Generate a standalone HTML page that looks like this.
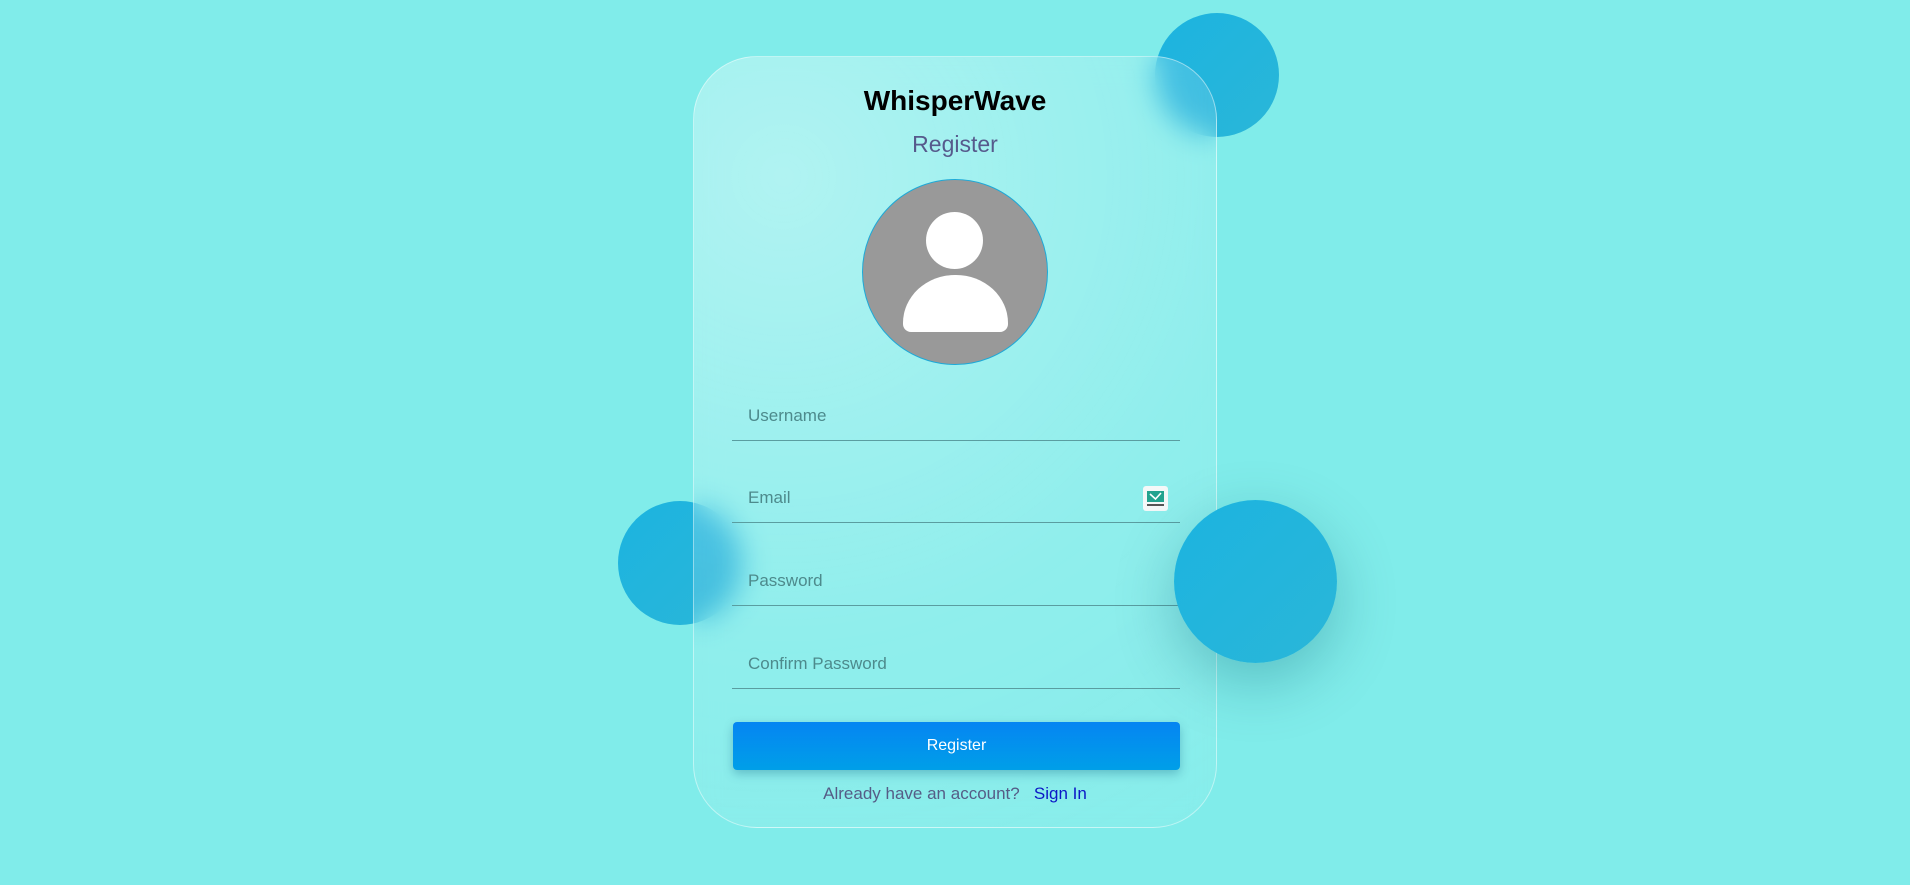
<!DOCTYPE html>
<html><head><meta charset="utf-8"><style>
html,body{margin:0;padding:0}
body{width:1910px;height:885px;background:#80ecea;position:relative;overflow:hidden;font-family:"Liberation Sans",Arial,sans-serif}
.c{position:absolute;border-radius:50%;background:linear-gradient(135deg,#1cb4e0,#2ab6d8)}
.card{position:absolute;left:693px;top:56px;width:524px;height:772px;box-sizing:border-box;border-radius:64px;border:1.5px solid rgba(255,255,255,.45);background:radial-gradient(circle at 90px 120px,rgba(255,255,255,.38),rgba(255,255,255,.12) 60%,rgba(255,255,255,.05));backdrop-filter:blur(14px);-webkit-backdrop-filter:blur(14px)}
.t{position:absolute;left:0;width:100%;text-align:center}
.f{position:absolute;left:38px;width:448px;border-bottom:1px solid #5a9da0;height:40px}
.f span{position:absolute;left:16px;top:6px;font-size:17px;color:#4d8a8c}
</style></head><body>
<div class="c" style="left:1155px;top:13px;width:124px;height:124px"></div>
<div class="c" style="left:618px;top:501px;width:124px;height:124px"></div>
<div class="card">
  <div class="t" style="top:28px;font-size:28px;font-weight:bold;color:#000">WhisperWave</div>
  <div class="t" style="top:74px;font-size:23px;color:#565a8c">Register</div>
  <div style="position:absolute;left:168px;top:122px;width:184px;height:184px;border-radius:50%;background:#999;border:1.5px solid #1da9d8;overflow:hidden">
    <div style="position:absolute;left:63px;top:32px;width:57px;height:57px;border-radius:50%;background:#fff"></div>
    <div style="position:absolute;left:40px;top:95px;width:105px;height:57px;background:#fff;border-radius:52px 52px 8px 8px/48px 48px 8px 8px"></div>
  </div>
  <div class="f" style="top:343px"><span>Username</span></div>
  <div class="f" style="top:425px"><span>Email</span>
    <div style="position:absolute;right:12px;top:4px;width:25px;height:25px;background:#f4f8f8;border-radius:3px">
      <div style="position:absolute;left:4px;top:5px;width:17px;height:11px;background:#23a38f"></div>
      <svg style="position:absolute;left:4px;top:5px" width="17" height="11"><path d="M3 3 L8.5 8 L14 2" stroke="#fff" stroke-width="1.6" fill="none"/></svg>
      <div style="position:absolute;left:4px;top:18px;width:17px;height:2px;background:#555"></div>
    </div>
  </div>
  <div class="f" style="top:508px"><span>Password</span></div>
  <div class="f" style="top:591px"><span>Confirm Password</span></div>
  <div style="position:absolute;left:39px;top:665px;width:447px;height:48px;border-radius:4px;background:linear-gradient(180deg,#0585f2,#009fe8);box-shadow:0 4px 10px rgba(0,80,120,.3);color:#fff;font-size:16px;text-align:center;line-height:48px">Register</div>
  <div class="t" style="top:727px;font-size:17px;color:#555c86">Already have an account?&nbsp;&nbsp; <span style="color:#0b17c6">Sign In</span></div>
</div>
<div class="c" style="left:1174px;top:500px;width:163px;height:163px;box-shadow:0 20px 60px rgba(0,90,110,.3)"></div>
</body></html>
